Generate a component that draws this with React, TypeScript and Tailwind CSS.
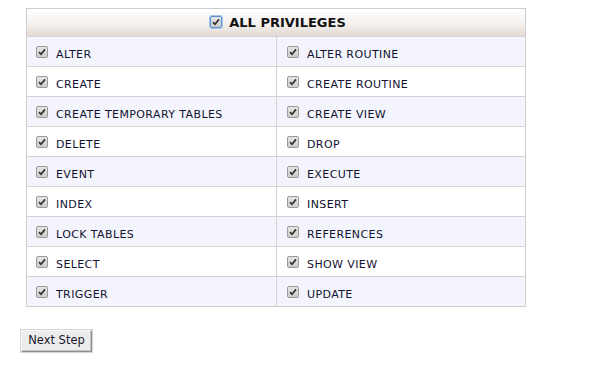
import React from 'react'

const rows: [string, string][] = [
  ['ALTER', 'ALTER ROUTINE'],
  ['CREATE', 'CREATE ROUTINE'],
  ['CREATE TEMPORARY TABLES', 'CREATE VIEW'],
  ['DELETE', 'DROP'],
  ['EVENT', 'EXECUTE'],
  ['INDEX', 'INSERT'],
  ['LOCK TABLES', 'REFERENCES'],
  ['SELECT', 'SHOW VIEW'],
  ['TRIGGER', 'UPDATE'],
]

const Check = ({ focus = false }: { focus?: boolean }) => (
  <span
    className={`inline-flex items-center justify-center w-[12px] h-[12px] rounded-[2px] border bg-gradient-to-b from-[#e6e6e6] to-[#cdcdcd] ${
      focus ? 'border-[#5b8fd6] ring-1 ring-[#a9c8f0]' : 'border-[#9a9a9a]'
    }`}
  >
    <svg width="8" height="8" viewBox="0 0 8 8">
      <path d="M1 4.2 L3 6.3 L7 1.4" fill="none" stroke="#333" strokeWidth="1.7" />
    </svg>
  </span>
)

const Cell = ({ label, right }: { label: string; right?: boolean }) => (
  <div className={`flex items-center h-[29px] gap-[8px] ${right ? 'pl-[10px] border-l border-[#d4d4d4]' : 'pl-[9px]'}`}>
    <span className="-mt-[2px] translate-y-[1px] flex">
      <Check />
    </span>
    <span className="mt-[2px] translate-y-[3px] text-[11px] text-[#111133] tracking-[0.4px]">{label}</span>
  </div>
)

export default function App() {
  return (
    <div className="w-[600px] h-[365px] bg-white pt-[8px] font-['DejaVu_Sans',Verdana,sans-serif]">
      <div className="ml-[26px] w-[500px] border border-[#cfcfcf]">
        <div className="h-[27px] flex items-center justify-center gap-[7px] bg-gradient-to-b from-white via-[#f6f3f1] to-[#e2d9d2] pl-[4px]">
          <span className="-mt-[2px] flex">
            <Check focus />
          </span>
          <span className="text-[13px] font-bold text-[#111]">ALL PRIVILEGES</span>
        </div>
        {rows.map(([a, b], i) => (
          <div
            key={a}
            className={`grid grid-cols-2 border-t border-[#d4d4d4] ${i % 2 === 0 ? 'bg-[#f4f5fc]' : 'bg-white'}`}
          >
            <Cell label={a} />
            <Cell label={b} right />
          </div>
        ))}
      </div>
      <button className="block mt-[23px] ml-[21px] w-[71px] h-[22px] text-[11.5px] text-[#1a1a2e] bg-[#ececec] border border-t-[#f8f8f8] border-l-[#f8f8f8] border-r-[#8f8f8f] border-b-[#8f8f8f] shadow-[inset_-1px_-1px_0_#c4c4c4,0_0_0_1px_#d6d6d6]">
        Next Step
      </button>
    </div>
  )
}
